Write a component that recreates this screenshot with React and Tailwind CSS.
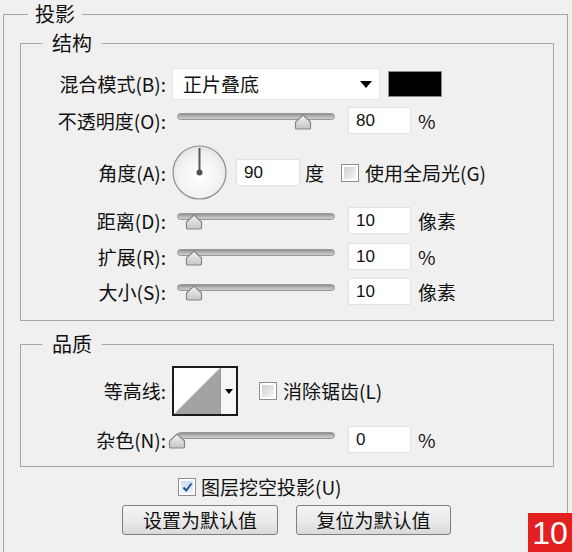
import React from 'react';

const cjk = "font-['Noto_Sans_CJK_SC',sans-serif]";
const num = "font-['Liberation_Sans',sans-serif]";

const Checkbox = ({ checked }) => (
  <div className="w-[18px] h-[18px] border border-[#8e8e8e] bg-white p-[2px] shrink-0">
    {checked ? (
      <div className="w-full h-full bg-linear-to-b from-[#c9dcf2] to-[#eaf2fb] flex items-center justify-center">
        <svg width="11" height="11" viewBox="0 0 11 11">
          <path d="M1.5 5.5 L4.2 8.5 L9.5 1.5" fill="none" stroke="#2b4f94" strokeWidth="2" />
        </svg>
      </div>
    ) : (
      <div className="w-full h-full bg-linear-to-br from-[#cfcfcf] to-[#f7f7f7]" />
    )}
  </div>
);

const Slider = ({ value }) => (
  <div className="relative w-[168px] h-[27px] shrink-0">
    <div className="absolute left-[5px] top-[6px] w-[158px] h-[7px] rounded-full border border-[#979797] bg-linear-to-b from-[#8e8e8e] via-[#b6b6b6] to-[#cdcdcd]" />
    <svg
      className="absolute top-[7px]"
      style={{ left: 5 + value * 158 - 9 }}
      width="18"
      height="16"
      viewBox="0 0 18 16"
    >
      <defs>
        <linearGradient id={`th${value}`} x1="0" y1="0" x2="0" y2="1">
          <stop offset="0" stopColor="#f2f2f2" />
          <stop offset="1" stopColor="#c6c6c6" />
        </linearGradient>
      </defs>
      <path d="M1.5 14 Q1.5 15 3 15 L15 15 Q16.5 15 16.5 14 L16.5 8 L9 1 L1.5 8 Z" fill={`url(#th${value})`} stroke="#858585" strokeWidth="1.2" />
    </svg>
  </div>
);

const NumBox = ({ value, w = 'w-[63px]' }) => (
  <div className={`${w} h-[27px] bg-white border border-[#e2e2e2] flex items-center pl-[7px] text-[17px] ${num} shrink-0`}>
    {value}
  </div>
);

const Label = ({ children }) => (
  <div className="w-[145px] text-right shrink-0">{children}</div>
);

const SliderRow = ({ label, value, pos, unit, className = '' }) => (
  <div className={`flex items-center ${className}`}>
    <Label>{label}</Label>
    <div className="ml-[6px]"><Slider value={pos} /></div>
    <div className="ml-[8px]"><NumBox value={value} /></div>
    <span className="ml-[7px]">{unit}</span>
  </div>
);

const App = () => {
  return (
    <div className={`relative w-[572px] h-[552px] overflow-hidden bg-[#f0f0f0] text-[#111] ${cjk} text-[19px] leading-[24px] pl-[3px] pt-[2px]`}>

      {/* 投影 */}
      <fieldset className="w-[565px] h-[580px] m-0 p-0 border border-[#a6a6a6]">
        <legend className="ml-[24px] px-[7px] text-[20px] leading-[24px]">投影</legend>

        {/* 结构 */}
        <fieldset className="mt-[5px] ml-[16px] w-[534px] m-0 p-0 pb-[15px] border border-[#a6a6a6]">
          <legend className="ml-[21px] px-[10px] text-[20px] leading-[24px]">结构</legend>

          <div className="flex items-center mt-[13px]">
            <Label>混合模式(B):</Label>
            <div className="ml-[6px] w-[208px] h-[32px] bg-white border border-[#e4e4e4] flex items-center justify-between pl-[10px] pr-[7px]">
              <span>正片叠底</span>
              <svg width="12" height="7" viewBox="0 0 12 7"><path d="M0 0 L12 0 L6 7 Z" fill="#000" /></svg>
            </div>
            <div className="ml-[8px] w-[54px] h-[26px] bg-black border border-[#8a8a8a]" />
          </div>

          <SliderRow className="mt-[7px]" label="不透明度(O):" value="80" pos={0.8} unit="%" />

          <div className="flex items-center mt-[11px]">
            <Label>角度(A):</Label>
            <svg className="ml-[6px] shrink-0" width="55" height="55" viewBox="0 0 55 55">
              <defs>
                <radialGradient id="dial" cx="0.5" cy="0.55" r="0.6">
                  <stop offset="0" stopColor="#ffffff" />
                  <stop offset="0.7" stopColor="#f1f1f1" />
                  <stop offset="1" stopColor="#dadada" />
                </radialGradient>
              </defs>
              <circle cx="27.5" cy="27.5" r="26.5" fill="url(#dial)" stroke="#8f8f8f" strokeWidth="1.2" />
              <line x1="27.5" y1="27.5" x2="27.5" y2="3" stroke="#5a5a5a" strokeWidth="2" />
              <circle cx="27.5" cy="27.5" r="3" fill="#4f4f4f" />
            </svg>
            <div className="ml-[9px]"><NumBox value="90" w="w-[64px]" /></div>
            <span className="ml-[5px]">度</span>
            <div className="ml-[17px]"><Checkbox /></div>
            <span className="ml-[6px]">使用全局光(G)</span>
          </div>

          <SliderRow className="mt-[7px]" label="距离(D):" value="10" pos={0.108} unit="像素" />
          <SliderRow className="mt-[9px]" label="扩展(R):" value="10" pos={0.108} unit="%" />
          <SliderRow className="mt-[8px]" label="大小(S):" value="10" pos={0.108} unit="像素" />
        </fieldset>

        {/* 品质 */}
        <fieldset className="mt-[11px] ml-[16px] w-[534px] m-0 p-0 pb-[13px] border border-[#a6a6a6]">
          <legend className="ml-[21px] px-[10px] text-[20px] leading-[24px]">品质</legend>

          <div className="flex items-center mt-[10px]">
            <Label>等高线:</Label>
            <div className="ml-[6px] w-[66px] h-[50px] border-2 border-[#1c1c1c] flex bg-white shrink-0">
              <svg width="46" height="46" viewBox="0 0 46 46" className="shrink-0">
                <path d="M0 46 L46 0 L46 46 Z" fill="#a3a3a3" />
              </svg>
              <div className="flex-1 border-l border-[#9a9a9a] bg-[#f6f6f6] flex items-center justify-center">
                <svg width="8" height="5" viewBox="0 0 8 5"><path d="M0 0 L8 0 L4 5 Z" fill="#000" /></svg>
              </div>
            </div>
            <div className="ml-[21px]"><Checkbox /></div>
            <span className="ml-[6px]">消除锯齿(L)</span>
          </div>

          <SliderRow className="mt-[10px]" label="杂色(N):" value="0" pos={0} unit="%" />
        </fieldset>

        <div className="flex items-center mt-[9px] ml-[174px] h-[22px]">
          <Checkbox checked />
          <span className="ml-[5px]">图层挖空投影(U)</span>
        </div>

        <div className="flex gap-[18px] mt-[7px] ml-[118px]">
          <button className="w-[156px] h-[30px] rounded-[3px] border border-[#7f7f7f] bg-linear-to-b from-[#f4f4f4] via-[#ebebeb] to-[#d9d9d9] text-[19px] leading-[24px]">
            设置为默认值
          </button>
          <button className="w-[155px] h-[30px] rounded-[3px] border border-[#7f7f7f] bg-linear-to-b from-[#f4f4f4] via-[#ebebeb] to-[#d9d9d9] text-[19px] leading-[24px]">
            复位为默认值
          </button>
        </div>
      </fieldset>

      {/* page number badge */}
      <div className={`absolute right-0 bottom-0 w-[44px] h-[39px] bg-[#e1201f] text-white flex items-center justify-center text-[32px] leading-none ${num}`}>
        10
      </div>
    </div>
  );
};

export default App;
